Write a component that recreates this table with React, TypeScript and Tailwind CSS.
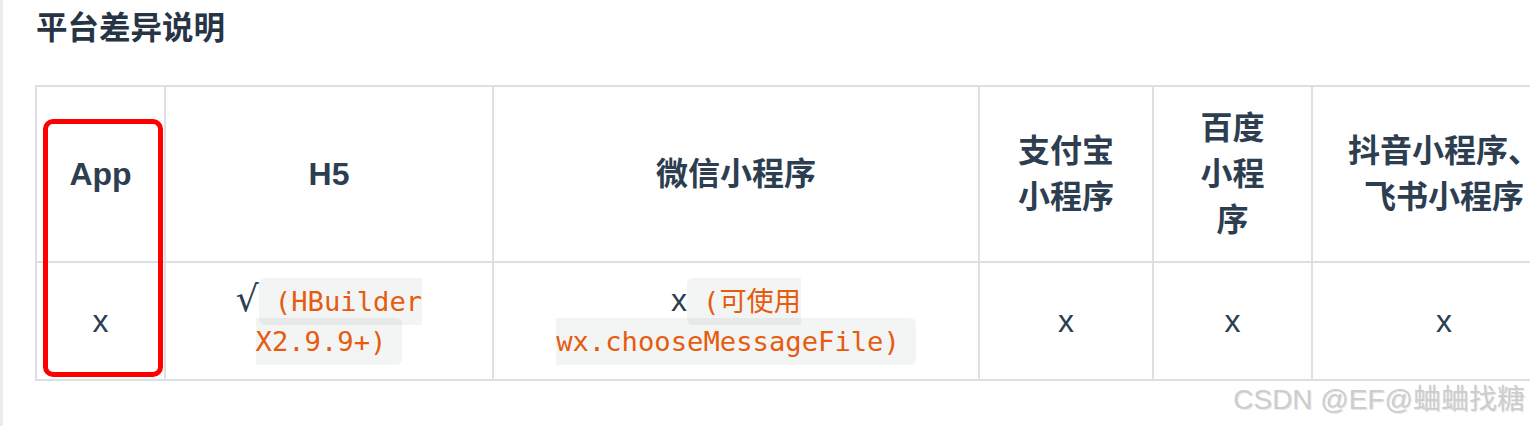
const sans = "font-['Liberation_Sans','Noto_Sans_CJK_SC',sans-serif]";

function Code({ children }: { children: React.ReactNode }) {
  return (
    <code className="font-['DejaVu_Sans_Mono','Noto_Sans_CJK_SC',monospace] text-[27.2px] text-[#e65c0f] bg-[rgba(27,31,35,0.05)] px-4 py-2 rounded-[6px]">
      {children}
    </code>
  );
}

const headers = ["App", "H5", "微信小程序", "支付宝小程序", "百度小程序", "抖音小程序、飞书小程序"];
const widths = ["w-[129px]", "w-[328px]", "w-[486px]", "w-[174px]", "w-[159px]", "w-[264px]"];

export default function App() {
  return (
    <div className={`relative w-[1530px] h-[426px] overflow-hidden bg-white border-l-[3px] border-[#ececec] text-[#2c3e50] ${sans}`}>
      <h3 className="pl-[33px] pt-[8px] text-[31.5px] leading-[40px] font-semibold text-[#273444]">平台差异说明</h3>

      <table className="ml-[32px] mt-[37px] table-fixed border-collapse w-[1542px]">
        <colgroup>
          {widths.map((w, i) => (
            <col key={i} className={w} />
          ))}
        </colgroup>
        <thead>
          <tr>
            {headers.map(h => (
              <th key={h} className="border-2 border-[#dcdfe3] px-8 py-[18px] text-[32px] leading-[46px] font-bold text-center align-middle">
                {h}
              </th>
            ))}
          </tr>
        </thead>
        <tbody>
          <tr className="text-[32px] leading-[38px] text-center">
            <td className="border-2 border-[#dcdfe3] px-8 py-[18px]">x</td>
            <td className="border-2 border-[#dcdfe3] px-8 py-[18px]">
              <span className="font-['DejaVu_Sans',sans-serif] text-[36px] leading-none">√</span>
              <Code>(HBuilder X2.9.9+)</Code>
            </td>
            <td className="border-2 border-[#dcdfe3] px-8 py-[18px]">
              x<Code>(可使用 wx.chooseMessageFile)</Code>
            </td>
            <td className="border-2 border-[#dcdfe3] px-8 py-[18px]">x</td>
            <td className="border-2 border-[#dcdfe3] px-8 py-[18px]">x</td>
            <td className="border-2 border-[#dcdfe3] px-8 py-[18px]">x</td>
          </tr>
        </tbody>
      </table>

      {/* annotation box around the App column */}
      <div className="absolute left-[40px] top-[119px] w-[120px] h-[258px] border-[5px] border-[#ff0000] rounded-[10px]" />

      <div className="absolute right-[5px] top-[383px] text-[28px] leading-[34px] text-[#cdcdcd] [text-shadow:1px_1px_0_#e8e8e8]">
        CSDN @EF@蛐蛐找糖
      </div>
    </div>
  );
}
